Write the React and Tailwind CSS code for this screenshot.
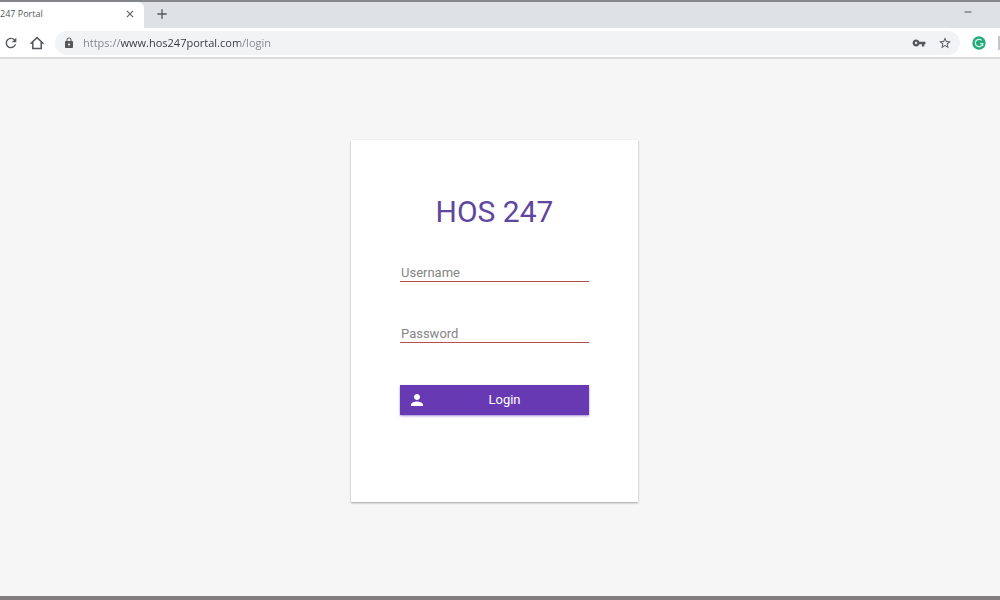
import React, { useState } from 'react';
import { MdAdd, MdClose, MdLock, MdPerson, MdRefresh, MdRemove, MdStarBorder, MdVpnKey } from 'react-icons/md';

const HomeIcon = () => (
  <svg viewBox="0 0 16 16" className="size-4" fill="none" stroke="currentColor" strokeWidth="1.5">
    <path d="M1.500 8.800 8 2.600l6.500 6.200M3.800 7v6.600h8.400V7" />
  </svg>
);

const GrammarIcon = () => (
  <svg viewBox="0 0 14 14" className="size-3.5">
    <circle cx="7" cy="7" r="6.700" fill="#27ab7b" />
    <path
      d="M9.700 4.400A3.700 3.700 0 1 0 10.700 7.600H8.200M10.700 7.400V10"
      fill="none"
      stroke="#d9f5ea"
      strokeWidth="1.200"
    />
  </svg>
);

const TabStrip = () => (
  <div className="flex h-[26px] bg-[#dee1e6] text-[#55585c]">
    <div className="flex w-36 items-center justify-between rounded-tr-md bg-white pr-2 pb-0.5">
      <span className="text-[9px] leading-4 whitespace-nowrap">247 Portal</span>
      <button type="button" aria-label="Close tab">
        <MdClose className="size-3" />
      </button>
    </div>
    <button type="button" aria-label="New tab" className="mb-0.5 ml-2.5">
      <MdAdd className="size-4" />
    </button>
    <button type="button" aria-label="Minimize" className="mr-[26px] mb-1.5 ml-auto">
      <MdRemove className="size-3" />
    </button>
  </div>
);

const Toolbar = () => {
  const [url, setUrl] = useState('https://www.hos247portal.com/login');

  return (
    <div className="flex h-[31px] items-center border-b-2 border-[#dcdcdc] bg-white pl-[3px] text-[#55585c]">
      <button type="button" aria-label="Reload">
        <MdRefresh className="size-4" />
      </button>
      <button type="button" aria-label="Home" className="ml-2.5">
        <HomeIcon />
      </button>
      <div className="ml-2.5 flex h-6 flex-1 items-center rounded-full bg-[#f1f3f4] px-2">
        <MdLock className="size-3" />
        {/* scheme and path are dimmed, the host stays dark */}
        <input
          type="text"
          aria-label="Address"
          value={url}
          onChange={(e) => setUrl(e.target.value)}
          className="ml-2 h-5 min-w-0 flex-1 bg-[linear-gradient(to_right,#808488_37px,#34373a_37px,#34373a_157px,#808488_157px)] bg-clip-text text-[11px] text-transparent outline-none"
        />
        <button type="button" aria-label="Saved passwords">
          <MdVpnKey className="size-3.5" />
        </button>
        <button type="button" aria-label="Bookmark" className="ml-3">
          <MdStarBorder className="size-3.5" />
        </button>
      </div>
      <button type="button" aria-label="Grammar check" className="ml-3">
        <GrammarIcon />
      </button>
      <div className="ml-3 h-3.5 w-0.5 bg-[#c4c6c9]" />
    </div>
  );
};

const Field = ({ name, label, type }) => (
  <input
    name={name}
    type={type}
    aria-label={label}
    placeholder={label}
    className="block h-[22px] w-full border-b border-[#b0504f] px-px pt-[3px] text-[13px] leading-4 text-[#333333] outline-none placeholder:text-[#858585]"
  />
);

const LoginCard = () => (
  <form
    onSubmit={(e) => e.preventDefault()}
    className="w-[287px] bg-white px-[49px] pt-[52px] pb-[87px] font-['Roboto',sans-serif] shadow-[0_1px_2px_rgba(0,0,0,0.35)]"
  >
    <h1 className="text-center text-[30px] leading-10 text-[#61469f]">HOS 247</h1>
    <div className="mt-7 flex flex-col gap-[39px]">
      <Field name="username" label="Username" type="text" />
      <Field name="password" label="Password" type="password" />
      <button
        type="submit"
        className="mt-[3px] flex h-[30px] items-center bg-[#673ab3] px-2 text-[13px] text-white shadow-[0_1px_2px_rgba(103,58,179,0.6)]"
      >
        <MdPerson className="size-[18px]" />
        <span className="flex-1 pl-0.5">Login</span>
      </button>
    </div>
  </form>
);

export default function App() {
  return (
    <div className="flex min-h-screen flex-col border-t-2 border-b-4 border-t-[#85868a] border-b-[#807e7f] bg-[#f6f6f6] font-['Open_Sans',sans-serif]">
      <TabStrip />
      <Toolbar />
      <main className="flex flex-1 justify-center pt-[81px] pr-[11px]">
        <div>
          <LoginCard />
        </div>
      </main>
    </div>
  );
}
